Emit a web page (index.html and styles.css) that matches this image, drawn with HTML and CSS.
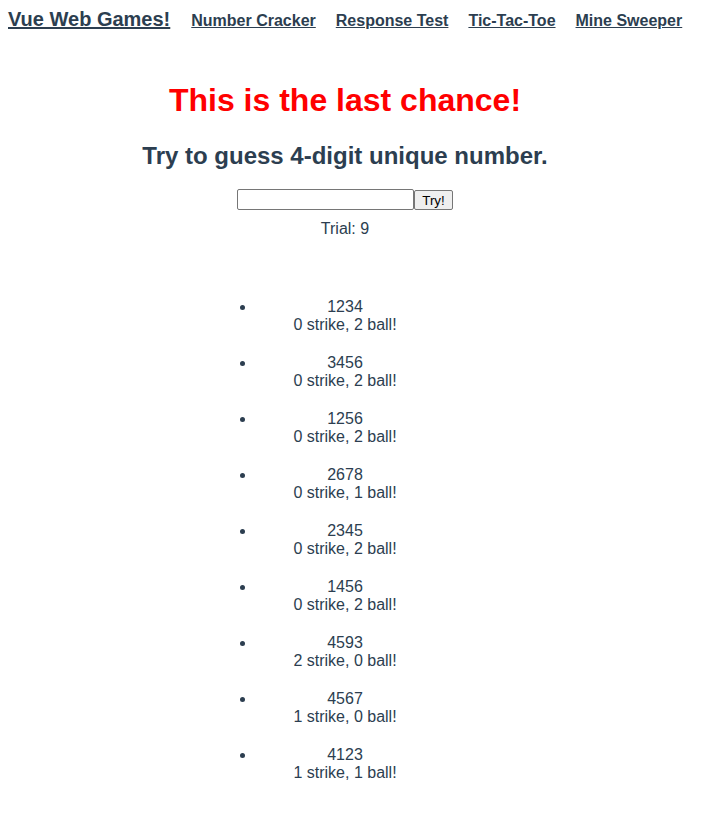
FILE: index.html
```html
<!DOCTYPE html>
<html lang="en">
<head>
<meta charset="utf-8">
<title>Vue Web Games!</title>
<link rel="stylesheet" href="styles.css">
</head>
<body>
<div class="app">
  <nav class="nav">
    <a class="brand" href="#">Vue Web Games!</a>
    <a class="nav-link" href="#">Number Cracker</a>
    <a class="nav-link" href="#">Response Test</a>
    <a class="nav-link" href="#">Tic-Tac-Toe</a>
    <a class="nav-link" href="#">Mine Sweeper</a>
  </nav>
  <main class="game">
    <h1 class="warning">This is the last chance!</h1>
    <h2 class="title">Try to guess 4-digit unique number.</h2>
    <form class="guess-form"><input class="guess-input" type="text"><button class="guess-btn" type="button">Try!</button></form>
    <div class="trial">Trial: 9</div>
    <ul class="history">
      <li class="history-item"><div>1234</div><div>0 strike, 2 ball!</div></li>
      <li class="history-item"><div>3456</div><div>0 strike, 2 ball!</div></li>
      <li class="history-item"><div>1256</div><div>0 strike, 2 ball!</div></li>
      <li class="history-item"><div>2678</div><div>0 strike, 1 ball!</div></li>
      <li class="history-item"><div>2345</div><div>0 strike, 2 ball!</div></li>
      <li class="history-item"><div>1456</div><div>0 strike, 2 ball!</div></li>
      <li class="history-item"><div>4593</div><div>2 strike, 0 ball!</div></li>
      <li class="history-item"><div>4567</div><div>1 strike, 0 ball!</div></li>
      <li class="history-item"><div>4123</div><div>1 strike, 1 ball!</div></li>
    </ul>
  </main>
</div>
</body>
</html>
```
FILE: styles.css
```css
html, body {
  margin: 0;
  padding: 0;
  background: #ffffff;
}
body {
  padding: 8px;
}
.app {
  font-family: "Liberation Sans", Arial, Helvetica, sans-serif;
  color: #2c3e50;
  font-size: 16px;
}
.nav {
  display: flex;
  align-items: baseline;
  gap: 20px;
}
.nav a {
  color: #2c3e50;
  font-weight: bold;
  text-decoration: underline;
}
.brand {
  font-size: 20px;
  margin-right: 1px;
}
.nav-link {
  font-size: 16px;
}
.game {
  text-align: center;
  padding-right: 11px;
}
.warning {
  color: #ff0000;
  font-size: 32px;
  margin: 51px 0 23px;
}
.title {
  font-size: 24px;
  margin: 0 0 19px;
}
.guess-form {
  display: flex;
  justify-content: center;
  margin: 0;
}
.guess-input {
  width: 171px;
  height: 17px;
  margin: 0;
  padding: 1px 2px;
  border: 1px solid #767676;
  border-radius: 2px;
  font-family: "Liberation Sans", Arial, sans-serif;
  font-size: 13.33px;
}
.guess-btn {
  margin: 1px 0 0;
  height: 20px;
  padding: 1px 7px;
  font-family: "Liberation Sans", Arial, sans-serif;
  font-size: 13.33px;
  color: #000;
  background: #efefef;
  border: 1px solid #767676;
  border-radius: 2px;
}
.trial {
  margin-top: 10px;
}
.history {
  width: 178px;
  margin: 60px auto 16px;
  padding: 0;
}
.history-item {
  margin-bottom: 20px;
}
```
